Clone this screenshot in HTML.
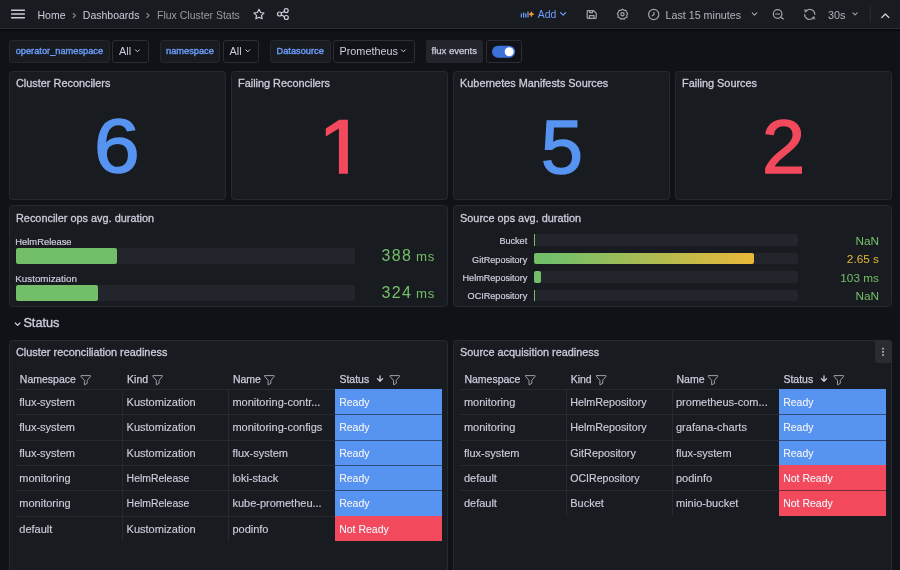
<!DOCTYPE html>
<html><head><meta charset="utf-8">
<style>
*{box-sizing:border-box;margin:0;padding:0}
html,body{width:900px;height:570px;overflow:hidden;will-change:transform;background:#111217;font-family:"Liberation Sans",sans-serif;color:#ccccdc}
.a{position:absolute;white-space:nowrap}
#hdr{position:absolute;left:0;top:0;width:900px;height:29px;background:#181b1f;border-bottom:1px solid #2a2d33}
.crumb{font-size:10.5px;line-height:12px;color:#ccccdc}
.vl{position:absolute;top:40px;height:23px;border:1px solid #24272d;border-radius:2px;background:#181b1f;color:#6e9fff;font-size:9.5px;font-weight:bold;line-height:21px;padding-left:6px}
.vv{position:absolute;top:40px;height:23px;border:1px solid #2a2d33;border-radius:2px;background:#111217;color:#ccccdc;font-size:11px;line-height:21px;padding-left:6px}
.panel{position:absolute;background:#181b1f;border:1px solid #26292f;border-radius:3.5px;overflow:hidden}
.ptitle{position:absolute;left:6px;top:5.9px;font-size:10.9px;line-height:11px;color:#ccccdc;white-space:nowrap;-webkit-text-stroke:0.3px #ccccdc}
.big{position:absolute;font-size:76px;line-height:77px;transform-origin:0 0;-webkit-text-stroke:1.5px currentColor}
.blue{color:#5794f2}.red{color:#f2495c}.green{color:#73bf69}.yellow{color:#eab839}
.track{position:absolute;background:#22252b;border-radius:2px}
.bar{position:absolute;border-radius:2px;background:#73bf69}
.blab{position:absolute;font-size:9px;line-height:10px;color:#ccccdc;white-space:nowrap}
.tbl{position:absolute}
.th{position:absolute;top:374px;font-size:10.5px;line-height:11px;color:#ccccdc;white-space:nowrap;-webkit-text-stroke:0.25px #ccccdc}
.td{position:absolute;font-size:11px;line-height:11px;color:#ccccdc;white-space:nowrap;-webkit-text-stroke:0.15px #ccccdc}
.hl{position:absolute;height:1px;background:#26292f}
.vln{position:absolute;width:1px;background:#26292f}
.cell{position:absolute;font-size:11px;line-height:24px;color:#fff;padding-left:4px;white-space:nowrap}
.vb{position:absolute;top:40px;height:23px;border:1px solid #24272d;border-radius:3px;background:#181b1f}
.vb.dk{background:#111217;border-color:#2a2d33}
.vlt{top:45.6px;font-size:9.25px;line-height:10px;color:#6a9af5;-webkit-text-stroke:0.4px #6a9af5}
.vvt{top:46px;font-size:10.85px;line-height:11px;color:#ccccdc}
</style></head>
<body>
<div id="hdr"></div><div class="a" style="left:0;top:29px;width:900px;height:3px;background:linear-gradient(#060709,#111217)"></div>
<svg class="a" style="left:0;top:0" width="900" height="28" viewBox="0 0 900 28" fill="none" stroke="#ccccdc" stroke-linecap="round" stroke-linejoin="round">
  <!-- hamburger -->
  <path d="M11.6 10.2H24.4M11.6 14H24.4M11.6 17.8H24.4" stroke-width="1.4"/>
  <!-- breadcrumb chevrons -->
  <path d="M73.2 13.3L75.4 15.5L73.2 17.7M146.8 13.3L149 15.5L146.8 17.7" stroke="#8e8e98" stroke-width="1.1"/>
  <!-- star -->
  <path d="M259 9.3L260.6 12.5L264 13L261.5 15.4L262.1 18.8L259 17.2L255.9 18.8L256.5 15.4L254 13L257.4 12.5Z" stroke-width="1.2"/>
  <!-- share -->
  <g stroke-width="1.2"><circle cx="286.2" cy="10.6" r="2"/><circle cx="279.5" cy="14" r="2"/><circle cx="286.3" cy="17.5" r="2"/><path d="M281.3 13L284.4 11.5M281.3 15L284.5 16.6"/></g>
  <!-- add icon bars -->
  <g stroke="#6e9fff" stroke-width="1.2" stroke-linecap="butt"><path d="M521.4 17.6V13.6M523.6 17.6V12.4M525.8 17.6V13.2M528 17.6V11.4"/></g>
  <path d="M531.4 12.2Q531.4 14.2 533.4 14.2Q531.4 14.2 531.4 16.2Q531.4 14.2 529.4 14.2Q531.4 14.2 531.4 12.2Z" fill="#ff9830" stroke="#ff9830" stroke-width="1.2"/>
  <path d="M560.6 12.6L563.1 15.1L565.6 12.6" stroke="#6e9fff" stroke-width="1.2"/>
  <!-- save -->
  <g stroke="#a2a3ac" stroke-width="1.2"><path d="M587.2 10.6H593.6L596.2 13.2V17.4Q596.2 18.4 595.2 18.4H588.2Q587.2 18.4 587.2 17.4V11.6Q587.2 10.6 588.2 10.6Z"/><path d="M589.4 18.2V15.6H594V18.2M589.6 10.8V12.6H592.6V10.8"/></g>
  <!-- gear -->
  <g stroke="#a2a3ac" stroke-width="1.2"><path d="M622.5 9.2L624.1 10.3L626 10.3L626.4 12.2L627.7 13.6L626.8 15.3L627 17.2L625.2 17.8L624 19.3L622.5 18.5L621 19.3L619.8 17.8L618 17.2L618.2 15.3L617.3 13.6L618.6 12.2L619 10.3L620.9 10.3Z"/><circle cx="622.5" cy="14.3" r="1.6"/></g>
  <!-- clock -->
  <g stroke="#a2a3ac" stroke-width="1.2"><circle cx="653.7" cy="14.5" r="5.1"/><path d="M653.9 12.3V14.7L652.3 15.7"/></g>
  <path d="M752.2 12.8L754.5 15.1L756.8 12.8" stroke="#a2a3ac" stroke-width="1.1"/>
  <!-- zoom out -->
  <g stroke="#a2a3ac" stroke-width="1.2"><circle cx="777.6" cy="14" r="4.3"/><path d="M775.6 14H779.6M780.8 17.2L783.4 19"/></g>
  <!-- refresh -->
  <g stroke="#a2a3ac" stroke-width="1.2"><path d="M804.6 14.6A5 5 0 0 0 813.2 17.9M814.8 14.2A5 5 0 0 0 806.2 10.9"/><path d="M804.9 9.7L807.5 10.5L805.5 12.3Z M814.5 19.1L811.9 18.3L813.9 16.5Z" fill="#a2a3ac" stroke-width="0.6"/></g>
  <path d="M853 12.8L855.1 14.9L857.2 12.8" stroke="#a2a3ac" stroke-width="1.1"/>
  <path d="M870.2 5.8V22.3" stroke="#2c2f35" stroke-width="1"/>
  <path d="M881.8 17.5L885.3 14L888.8 17.5" stroke="#ccccdc" stroke-width="1.3"/>
</svg>
<div class="a crumb" style="left:37.5px;top:8.5px">Home</div>
<div class="a crumb" style="left:82.8px;top:8.5px">Dashboards</div>
<div class="a crumb" style="left:157px;top:8.5px;color:#9a9aa6">Flux Cluster Stats</div>
<div class="a crumb" style="left:537.8px;top:8.5px;color:#6e9fff;font-size:10.4px">Add</div>
<div class="a crumb" style="left:665.6px;top:8.5px;color:#b4b4c0;font-size:10.7px">Last 15 minutes</div>
<div class="a crumb" style="left:828px;top:8.5px;color:#b4b4c0;font-size:10.8px">30s</div>

<!-- variables -->
<div class="vb" style="left:9px;width:101px"></div>
<div class="vb dk" style="left:112px;width:37px"></div>
<div class="vb" style="left:160px;width:60px"></div>
<div class="vb dk" style="left:223px;width:36px"></div>
<div class="vb" style="left:270px;width:61px"></div>
<div class="vb dk" style="left:333px;width:82px"></div>
<div class="a" style="left:426px;top:40px;width:57px;height:23px;background:#22252b;border-radius:2px"></div>
<div class="vb dk" style="left:486px;width:36px"></div>
<div class="a vlt" style="left:15.7px">operator_namespace</div>
<div class="a vlt" style="left:166px">namespace</div>
<div class="a vlt" style="left:276.5px">Datasource</div>
<div class="a vvt" style="left:119px">All</div>
<div class="a vvt" style="left:229.5px">All</div>
<div class="a vvt" style="left:339.5px">Prometheus</div>
<div class="a vvt" style="left:431.5px;font-size:9.5px;top:45px;-webkit-text-stroke:0.25px #ccccdc">flux events</div>
<svg class="a" style="left:0;top:34px" width="540" height="30" viewBox="0 34 540 30" fill="none" stroke="#ccccdc" stroke-width="1.1" stroke-linecap="round" stroke-linejoin="round">
<path d="M135.4 49.8L137.4 51.8L139.4 49.8M245.8 49.8L247.8 51.8L249.8 49.8M401.4 49.8L403.4 51.8L405.4 49.8" stroke-width="1"/>
<rect x="492" y="45.7" width="23.2" height="12" rx="6" fill="#3d71d9" stroke="none"/>
<circle cx="509.2" cy="51.7" r="4.5" fill="#fff" stroke="none"/>
</svg>
<!-- stat panels -->
<div class="panel" style="left:9px;top:71px;width:217px;height:129px"><div class="ptitle">Cluster Reconcilers</div></div>
<div class="panel" style="left:231px;top:71px;width:217px;height:129px"><div class="ptitle">Failing Reconcilers</div></div>
<div class="panel" style="left:453px;top:71px;width:217px;height:129px"><div class="ptitle">Kubernetes Manifests Sources</div></div>
<div class="panel" style="left:675px;top:71px;width:217px;height:129px"><div class="ptitle">Failing Sources</div></div>
<div class="a big blue" style="left:93.8px;top:107.4px;transform:scaleX(1.08)">6</div>
<div class="a big blue" style="left:541.2px;top:107.6px;transform:scaleX(0.99)">5</div>
<div class="a big red" style="left:761.5px;top:108.4px;transform:scaleX(1.02)">2</div>
<svg class="a" style="left:320px;top:115px" width="35" height="65" viewBox="320 115 35 65"><path d="M339.2 119.7H347.9V173.8H338.9V128.6L325.8 136.6V128.4Z" fill="#f2495c"/></svg>
<!-- bar gauges -->
<div class="panel" style="left:9px;top:205px;width:439px;height:102px"><div class="ptitle" style="top:6.5px">Reconciler ops avg. duration</div></div>
<div class="panel" style="left:453px;top:205px;width:439px;height:102px"><div class="ptitle" style="top:6.5px">Source ops avg. duration</div></div>
<div class="blab" style="left:15.3px;top:237px;font-size:9.4px;-webkit-text-stroke:0.2px #ccccdc">HelmRelease</div>
<div class="track" style="left:15.6px;top:247.8px;width:339px;height:16.2px"></div>
<div class="bar" style="left:15.6px;top:247.8px;width:101.2px;height:16.2px"></div>
<div class="blab" style="left:15.3px;top:274px;font-size:9.8px;-webkit-text-stroke:0.2px #ccccdc">Kustomization</div>
<div class="track" style="left:15.6px;top:284.7px;width:339px;height:16.2px"></div>
<div class="bar" style="left:15.6px;top:284.7px;width:82.4px;height:16.2px"></div>
<div class="a green" style="left:381.5px;top:247.5px;font-size:16px;line-height:16px;letter-spacing:1.4px">388<span style="font-size:13.2px;letter-spacing:0.7px;margin-left:3.6px">ms</span></div>
<div class="a green" style="left:381.5px;top:285.2px;font-size:16px;line-height:16px;letter-spacing:1.4px">324<span style="font-size:13.2px;letter-spacing:0.7px;margin-left:3.6px">ms</span></div>
<div class="blab" style="right:372.79999999999995px;top:235.9px;font-size:9.1px;text-align:right;-webkit-text-stroke:0.2px #ccccdc">Bucket</div>
<div class="track" style="left:534px;top:234.1px;width:264.4px;height:11.5px"></div>
<div class="bar" style="left:534px;top:234.1px;width:1.2px;height:11.5px;background:#73bf69;border-radius:0"></div>
<div class="a green" style="right:21px;top:234.6px;font-size:11.8px;line-height:12px">NaN</div>
<div class="blab" style="right:372.79999999999995px;top:254.6px;font-size:9.1px;text-align:right;-webkit-text-stroke:0.2px #ccccdc">GitRepository</div>
<div class="track" style="left:534px;top:252.8px;width:264.4px;height:11.5px"></div>
<div class="bar" style="left:534px;top:252.8px;width:220px;height:11.5px;background:linear-gradient(90deg,#73bf69 8%,#eab839 100%);border-radius:2px"></div>
<div class="a yellow" style="right:21px;top:253.3px;font-size:11.8px;line-height:12px">2.65 s</div>
<div class="blab" style="right:372.79999999999995px;top:272.8px;font-size:9.1px;text-align:right;-webkit-text-stroke:0.2px #ccccdc">HelmRepository</div>
<div class="track" style="left:534px;top:271px;width:264.4px;height:11.5px"></div>
<div class="bar" style="left:534px;top:271px;width:6.9px;height:11.5px;background:#73bf69;border-radius:2px"></div>
<div class="a green" style="right:21px;top:271.5px;font-size:11.8px;line-height:12px">103 ms</div>
<div class="blab" style="right:372.79999999999995px;top:291.4px;font-size:9.1px;text-align:right;-webkit-text-stroke:0.2px #ccccdc">OCIRepository</div>
<div class="track" style="left:534px;top:289.6px;width:264.4px;height:11.5px"></div>
<div class="bar" style="left:534px;top:289.6px;width:1.2px;height:11.5px;background:#73bf69;border-radius:0"></div>
<div class="a green" style="right:21px;top:290.1px;font-size:11.8px;line-height:12px">NaN</div>
<!-- status row -->
<svg class="a" style="left:10px;top:315px" width="15" height="15" viewBox="10 315 15 15" fill="none" stroke="#ccccdc" stroke-width="1.2" stroke-linecap="round" stroke-linejoin="round"><path d="M15.3 323L17.6 325.3L19.9 323"/></svg>
<div class="a" style="left:23.4px;top:316.5px;font-size:12.7px;line-height:13px;color:#ccccdc;-webkit-text-stroke:0.35px #ccccdc">Status</div>
<!-- tables -->
<div class="panel" style="left:9px;top:340px;width:439px;height:240px"><div class="ptitle">Cluster reconciliation readiness</div></div>
<div class="panel" style="left:453px;top:340px;width:439px;height:240px"><div class="ptitle">Source acquisition readiness</div></div>
<div class="a" style="left:874.8px;top:340px;width:17.2px;height:23px;background:#2a2c32;border-radius:0 3px 0 3px"></div>
<svg class="a" style="left:875px;top:341px" width="17" height="22" viewBox="875 341 17 22" fill="#b8b8c4"><rect x="882.2" y="347.8" width="1.7" height="1.7"/><rect x="882.2" y="351" width="1.7" height="1.7"/><rect x="882.2" y="354.2" width="1.7" height="1.7"/></svg>
<div class="th" style="left:19.8px">Namespace</div>
<div class="th" style="left:127.1px">Kind</div>
<div class="th" style="left:232.9px">Name</div>
<div class="th" style="left:339.4px">Status</div>
<div class="hl" style="left:15.6px;top:389px;width:426px"></div>
<div class="td" style="left:19.3px;top:397px;font-size:11px">flux-system</div>
<div class="td" style="left:126.6px;top:397px;font-size:11px">Kustomization</div>
<div class="td" style="left:232.4px;top:397px;font-size:11px">monitoring-contr...</div>
<div class="a" style="left:334.8px;top:389px;width:107px;height:25px;background:#5794f2"></div>
<div class="td" style="left:339.2px;top:397px;font-size:10.5px;color:#fff">Ready</div>
<div class="hl" style="left:15.6px;top:414px;width:319.6px"></div>
<div class="td" style="left:19.3px;top:422px;font-size:11px">flux-system</div>
<div class="td" style="left:126.6px;top:422px;font-size:11px">Kustomization</div>
<div class="td" style="left:232.4px;top:422px;font-size:11px">monitoring-configs</div>
<div class="a" style="left:334.8px;top:414px;width:107px;height:26px;background:#5794f2"></div>
<div class="a" style="left:334.8px;top:414px;width:107px;height:1px;background:rgba(17,18,23,0.55)"></div>
<div class="td" style="left:339.2px;top:422px;font-size:10.5px;color:#fff">Ready</div>
<div class="hl" style="left:15.6px;top:440px;width:319.6px"></div>
<div class="td" style="left:19.3px;top:448px;font-size:11px">flux-system</div>
<div class="td" style="left:126.6px;top:448px;font-size:11px">Kustomization</div>
<div class="td" style="left:232.4px;top:448px;font-size:11px">flux-system</div>
<div class="a" style="left:334.8px;top:440px;width:107px;height:25px;background:#5794f2"></div>
<div class="a" style="left:334.8px;top:440px;width:107px;height:1px;background:rgba(17,18,23,0.55)"></div>
<div class="td" style="left:339.2px;top:448px;font-size:10.5px;color:#fff">Ready</div>
<div class="hl" style="left:15.6px;top:465px;width:319.6px"></div>
<div class="td" style="left:19.3px;top:473px;font-size:11px">monitoring</div>
<div class="td" style="left:126.6px;top:473px;font-size:10.45px">HelmRelease</div>
<div class="td" style="left:232.4px;top:473px;font-size:11px">loki-stack</div>
<div class="a" style="left:334.8px;top:465px;width:107px;height:25px;background:#5794f2"></div>
<div class="a" style="left:334.8px;top:465px;width:107px;height:1px;background:rgba(17,18,23,0.55)"></div>
<div class="td" style="left:339.2px;top:473px;font-size:10.5px;color:#fff">Ready</div>
<div class="hl" style="left:15.6px;top:490px;width:319.6px"></div>
<div class="td" style="left:19.3px;top:498px;font-size:11px">monitoring</div>
<div class="td" style="left:126.6px;top:498px;font-size:10.45px">HelmRelease</div>
<div class="td" style="left:232.4px;top:498px;font-size:11px">kube-prometheu...</div>
<div class="a" style="left:334.8px;top:490px;width:107px;height:26px;background:#5794f2"></div>
<div class="a" style="left:334.8px;top:490px;width:107px;height:1px;background:rgba(17,18,23,0.55)"></div>
<div class="td" style="left:339.2px;top:498px;font-size:10.5px;color:#fff">Ready</div>
<div class="hl" style="left:15.6px;top:516px;width:319.6px"></div>
<div class="td" style="left:19.3px;top:524px;font-size:11px">default</div>
<div class="td" style="left:126.6px;top:524px;font-size:11px">Kustomization</div>
<div class="td" style="left:232.4px;top:524px;font-size:11px">podinfo</div>
<div class="a" style="left:334.8px;top:516px;width:107px;height:25px;background:#f2495c"></div>
<div class="td" style="left:339.2px;top:524px;font-size:10.5px;color:#fff">Not Ready</div>
<div class="vln" style="left:122.3px;top:389px;height:152px"></div>
<div class="vln" style="left:228.1px;top:389px;height:152px"></div>
<svg class="a" style="left:0;top:360px" width="900" height="30" viewBox="0 360 900 30" fill="none" stroke="#9d9da8" stroke-width="1" stroke-linejoin="round" stroke-linecap="round"><path d="M81.4 375.6H90.2Q91.0 375.6 90.5 376.4L87.2 380.3V383.4L84.4 384.8V380.3L80.9 376.4Q80.4 375.6 81.4 375.6Z"/><path d="M153.3 375.6H162.1Q162.9 375.6 162.4 376.4L159.1 380.3V383.4L156.3 384.8V380.3L152.8 376.4Q152.3 375.6 153.3 375.6Z"/><path d="M265.1 375.6H273.9Q274.7 375.6 274.2 376.4L270.9 380.3V383.4L268.1 384.8V380.3L264.6 376.4Q264.1 375.6 265.1 375.6Z"/><path d="M380.0 375.8V381M377.4 378.6L380.0 381.3L382.6 378.6" stroke="#ccccdc" stroke-width="1.3"/><path d="M390.5 375.6H399.3Q400.1 375.6 399.6 376.4L396.3 380.3V383.4L393.5 384.8V380.3L390.0 376.4Q389.5 375.6 390.5 375.6Z"/></svg>
<div class="th" style="left:464.4px">Namespace</div>
<div class="th" style="left:570.7px">Kind</div>
<div class="th" style="left:676.5px">Name</div>
<div class="th" style="left:783.4px">Status</div>
<div class="hl" style="left:460.2px;top:389px;width:426px"></div>
<div class="td" style="left:463.9px;top:397px;font-size:11px">monitoring</div>
<div class="td" style="left:570.2px;top:397px;font-size:10.75px">HelmRepository</div>
<div class="td" style="left:676.0px;top:397px;font-size:11px">prometheus-com...</div>
<div class="a" style="left:778.8px;top:389px;width:107px;height:25px;background:#5794f2"></div>
<div class="td" style="left:783.2px;top:397px;font-size:10.5px;color:#fff">Ready</div>
<div class="hl" style="left:460.2px;top:414px;width:319.0px"></div>
<div class="td" style="left:463.9px;top:422px;font-size:11px">monitoring</div>
<div class="td" style="left:570.2px;top:422px;font-size:10.75px">HelmRepository</div>
<div class="td" style="left:676.0px;top:422px;font-size:11px">grafana-charts</div>
<div class="a" style="left:778.8px;top:414px;width:107px;height:26px;background:#5794f2"></div>
<div class="a" style="left:778.8px;top:414px;width:107px;height:1px;background:rgba(17,18,23,0.55)"></div>
<div class="td" style="left:783.2px;top:422px;font-size:10.5px;color:#fff">Ready</div>
<div class="hl" style="left:460.2px;top:440px;width:319.0px"></div>
<div class="td" style="left:463.9px;top:448px;font-size:11px">flux-system</div>
<div class="td" style="left:570.2px;top:448px;font-size:10.85px">GitRepository</div>
<div class="td" style="left:676.0px;top:448px;font-size:11px">flux-system</div>
<div class="a" style="left:778.8px;top:440px;width:107px;height:25px;background:#5794f2"></div>
<div class="a" style="left:778.8px;top:440px;width:107px;height:1px;background:rgba(17,18,23,0.55)"></div>
<div class="td" style="left:783.2px;top:448px;font-size:10.5px;color:#fff">Ready</div>
<div class="hl" style="left:460.2px;top:465px;width:319.0px"></div>
<div class="td" style="left:463.9px;top:473px;font-size:11px">default</div>
<div class="td" style="left:570.2px;top:473px;font-size:10.6px">OCIRepository</div>
<div class="td" style="left:676.0px;top:473px;font-size:11px">podinfo</div>
<div class="a" style="left:778.8px;top:465px;width:107px;height:25px;background:#f2495c"></div>
<div class="td" style="left:783.2px;top:473px;font-size:10.5px;color:#fff">Not Ready</div>
<div class="hl" style="left:460.2px;top:490px;width:319.0px"></div>
<div class="td" style="left:463.9px;top:498px;font-size:11px">default</div>
<div class="td" style="left:570.2px;top:498px;font-size:11px">Bucket</div>
<div class="td" style="left:676.0px;top:498px;font-size:11px">minio-bucket</div>
<div class="a" style="left:778.8px;top:490px;width:107px;height:26px;background:#f2495c"></div>
<div class="a" style="left:778.8px;top:490px;width:107px;height:1px;background:rgba(17,18,23,0.55)"></div>
<div class="td" style="left:783.2px;top:498px;font-size:10.5px;color:#fff">Not Ready</div>
<div class="vln" style="left:565.9px;top:389px;height:127px"></div>
<div class="vln" style="left:671.7px;top:389px;height:127px"></div>
<svg class="a" style="left:0;top:360px" width="900" height="30" viewBox="0 360 900 30" fill="none" stroke="#9d9da8" stroke-width="1" stroke-linejoin="round" stroke-linecap="round"><path d="M526.0 375.6H534.8Q535.6 375.6 535.1 376.4L531.8 380.3V383.4L529.0 384.8V380.3L525.5 376.4Q525.0 375.6 526.0 375.6Z"/><path d="M596.9 375.6H605.7Q606.5 375.6 606.0 376.4L602.7 380.3V383.4L599.9 384.8V380.3L596.4 376.4Q595.9 375.6 596.9 375.6Z"/><path d="M708.7 375.6H717.5Q718.3 375.6 717.8 376.4L714.5 380.3V383.4L711.7 384.8V380.3L708.2 376.4Q707.7 375.6 708.7 375.6Z"/><path d="M824.0 375.8V381M821.4 378.6L824.0 381.3L826.6 378.6" stroke="#ccccdc" stroke-width="1.3"/><path d="M834.5 375.6H843.3Q844.1 375.6 843.6 376.4L840.3 380.3V383.4L837.5 384.8V380.3L834.0 376.4Q833.5 375.6 834.5 375.6Z"/></svg>
</body></html>
